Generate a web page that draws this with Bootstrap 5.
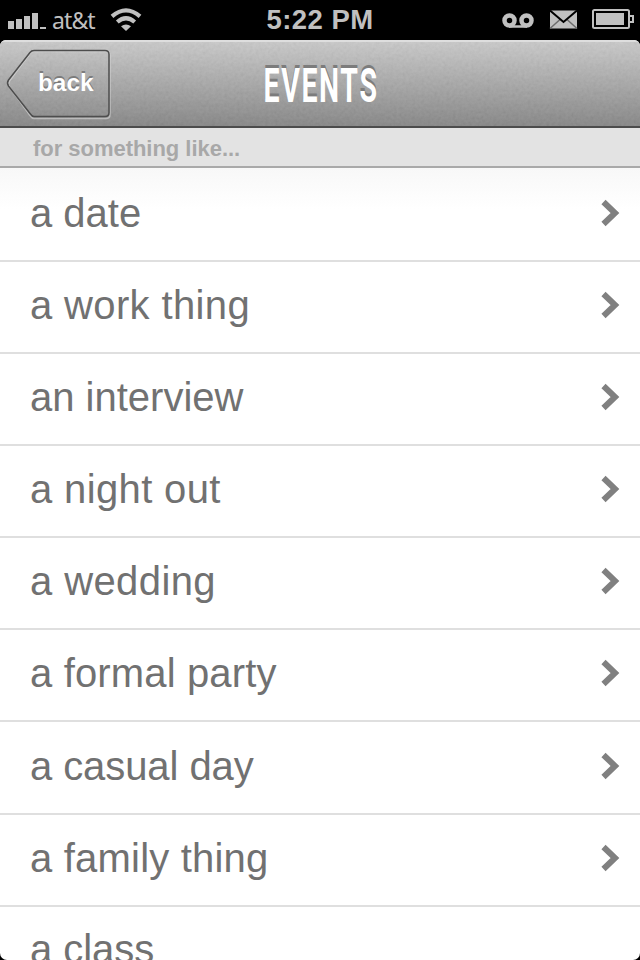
<!DOCTYPE html>
<html lang="en">
<head>
<meta charset="utf-8">
<meta name="viewport" content="width=device-width, initial-scale=1">
<title>Events</title>
<link href="https://cdn.jsdelivr.net/npm/bootstrap@5.3.0/dist/css/bootstrap.min.css" rel="stylesheet">
<style>
body { background: #000; font-family: "Liberation Sans", Arial, sans-serif; }
.phone { width: 640px; height: 960px; }
.status-bar { height: 40px; color: #c0c0c0; }
.status-bar svg { display: block; }
.carrier { font: 23px/40px "Noto Sans", sans-serif; letter-spacing: -.9px; width: 56px; }
.clock { font-size: 27.5px; line-height: 40px; letter-spacing: .45px; }
.app { border-radius: 6px 6px 7px 7px; background: #fff; }
.title-bar { height: 88px; background: linear-gradient(#c9c9c9, #848484); border-top: 2px solid #dedede; border-bottom: 2px solid #4c4c4c; }
.title-bar svg { display: block; }
.title-bar text { text-shadow: 0 -2px 0 #7c7c7c; }
.grain { inset: 0; width: 100%; height: 100%; opacity: .1; }
.back-link { width: 112px; height: 84px; }
.section-head { height: 40px; background: #e3e3e3; border-bottom: 2px solid #a9a9a9; color: #a8a8a8; font-size: 22px; line-height: 41px; padding-left: 33px; letter-spacing: -.03px; }
.events .list-group-item { height: 92.1px; border: 0; border-bottom: 2px solid #dfdfdf; padding: 0 20px 4px 30px; color: #717171; font-size: 40px; line-height: 1; background: none; }
.events .list-group-item:first-child { height: 94px; padding-bottom: 2px; background: linear-gradient(#f8f8f8, #fff 45%); }
.events .list-group-item:last-child { padding-bottom: 7px; }
</style>
<script src="https://cdn.jsdelivr.net/npm/bootstrap@5.3.0/dist/js/bootstrap.bundle.min.js"></script>
</head>
<body class="overflow-hidden">
<div class="phone d-flex flex-column overflow-hidden">
  <header class="status-bar d-flex flex-shrink-0">
    <div class="col d-flex">
      <svg width="52" height="40" fill="#c0c0c0"><path d="M8 21h6v8H8zM16 19h6v10h-6zM24 16h6v13h-6zM32 13h6v16h-6zM40 27h6v2h-6z"/></svg>
      <span class="carrier">at&amp;t</span>
      <svg width="34" height="40" viewBox="108 0 34 40" fill="none" stroke="#c0c0c0" stroke-width="4.2"><path d="M112 16.400Q126 4.400 140 16.400M117.300 22Q126 14.500 134.700 22"/><path d="M121 26.300Q126 22.500 131 26.300L126 31Z" fill="#c0c0c0" stroke="none"/></svg>
    </div>
    <div class="clock fw-bold text-center">5:22 PM</div>
    <div class="col d-flex justify-content-end">
      <svg width="140" height="40" viewBox="500 0 140 40">
        <g fill="none" stroke="#c0c0c0" stroke-width="4.500"><circle cx="509.500" cy="20.500" r="5"/><circle cx="526.500" cy="20.500" r="5"/><path d="M509 26.500h18" stroke-width="2.500"/></g>
        <path d="M550 10.500h27v18h-27z" fill="#c0c0c0"/>
        <path d="M550 28.500l10-9M577 28.500l-10-9" stroke="#6c6c6c" stroke-width="1.500"/>
        <path d="M550 10.500l13.500 11.500L577 10.500" fill="none" stroke="#000" stroke-width="2"/>
        <rect x="593" y="10" width="36" height="18" rx="1.500" fill="none" stroke="#c0c0c0" stroke-width="2"/>
        <path d="M596 13h28v12h-28z" fill="#c0c0c0"/><path d="M630 16h3v6h-3" fill="none" stroke="#c0c0c0" stroke-width="2"/>
      </svg>
    </div>
  </header>
  <main class="app flex-grow-1 overflow-hidden">
    <nav class="title-bar position-relative d-flex">
      <svg class="grain position-absolute" aria-hidden="true"><filter id="grain"><feTurbulence type="fractalNoise" baseFrequency=".32" numOctaves="2"/><feColorMatrix type="saturate" values="0"/><feComponentTransfer><feFuncA type="linear" slope="0" intercept="1"/></feComponentTransfer></filter><rect width="100%" height="100%" filter="url(#grain)"/></svg>
      <a href="#" class="back-link position-relative">
        <svg width="112" height="84" viewBox="0 42 112 84">
          <path d="M34 51.500h72q4 0 4 4v59q0 4-4 4H34q-2 0-4-3L9.500 87q-2-3 0-6L30 53.500q1.500-2 4-2Z" fill="none" stroke="#d8d8d8" stroke-opacity=".6" stroke-width="1.500"/>
          <path d="M34 50.500h71q4 0 4 4v58q0 4-4 4H34q-2 0-4-3L8.500 86q-2-3 0-6L30 52.500q1.500-2 4-2Z" fill="none" stroke="#4d4d4d" stroke-width="1.500"/>
          <text x="38" y="91" font-family="Liberation Sans" font-weight="700" font-size="24" textLength="55.500" lengthAdjust="spacingAndGlyphs" fill="#fff">back</text>
        </svg>
      </a>
      <svg class="position-relative" width="416" height="84" viewBox="112 42 416 84">
        <text transform="translate(263.500 101.500) scale(.6 1)" font-family="Roboto" font-weight="700" font-size="47.500" letter-spacing="2.7" fill="#fff">EVENTS</text>
      </svg>
    </nav>
    <div class="section-head fw-bold">for something like...</div>
    <div class="events list-group list-group-flush" id="events"></div>
  </main>
</div>
<script>
// label, letter spacing in px
const events = [["a date", 0], ["a work thing", .36], ["an interview", 0], ["a night out", .36], ["a wedding", .4], ["a formal party", .15], ["a casual day", -.08], ["a family thing", .2], ["a class", -.05]];
const chevron = '<svg width="20" height="28" fill="none" stroke="#808080" stroke-width="6"><path d="M3.500 3l11.500 11L3.500 25"/></svg>';
document.getElementById("events").innerHTML = events.map(([name, spacing], i) =>
  `<a href="#" class="list-group-item d-flex align-items-center justify-content-between"><span style="letter-spacing:${spacing}px">${name}</span>${i < events.length - 1 ? chevron : ""}</a>`).join("");
</script>
</body>
</html>
